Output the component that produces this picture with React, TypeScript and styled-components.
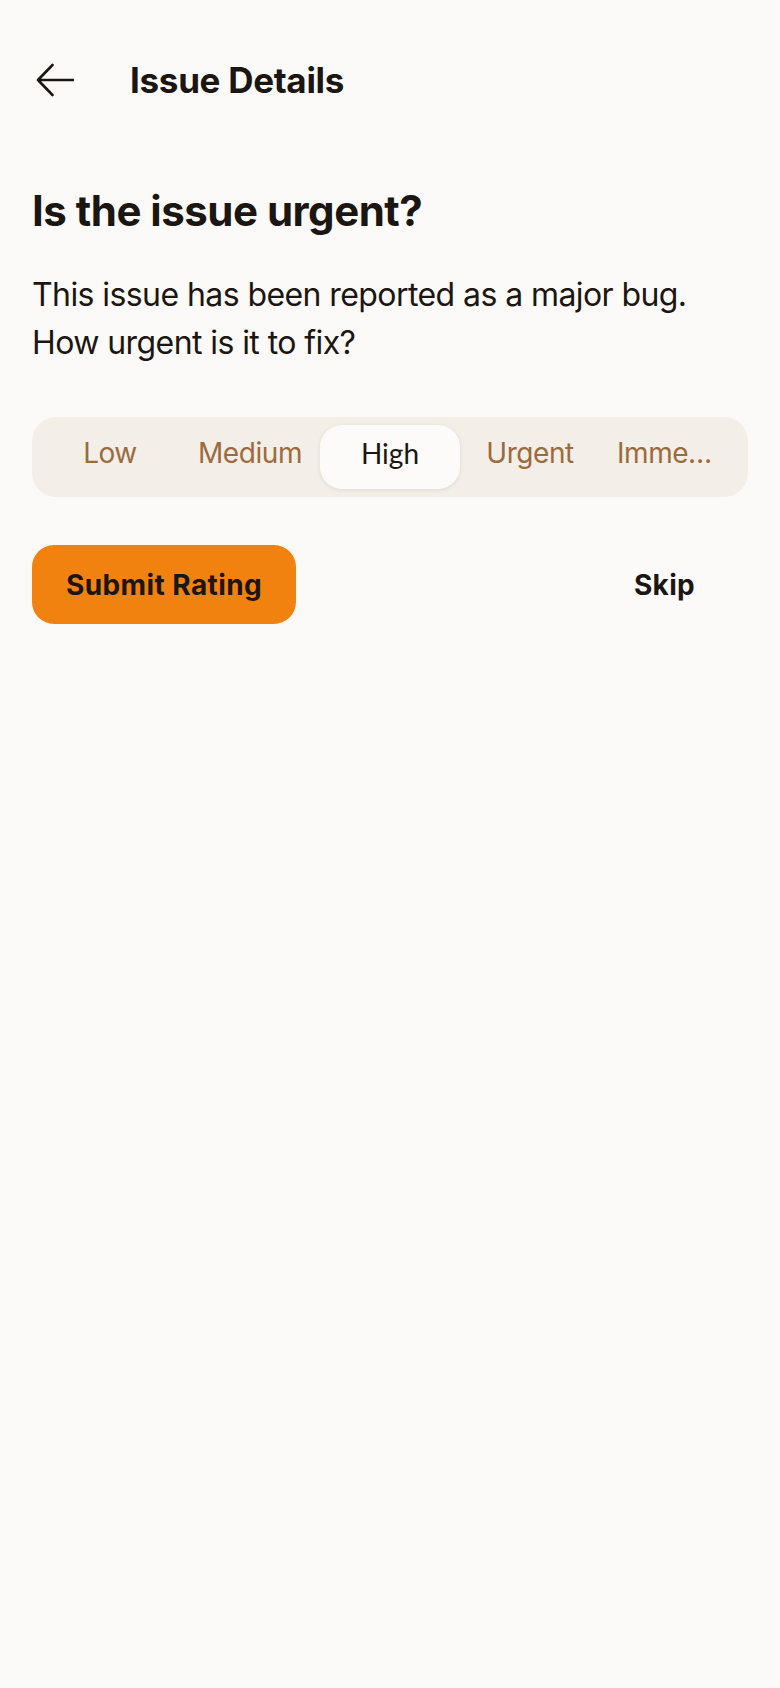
import React, { useState } from "react";
import styled, { createGlobalStyle } from "styled-components";

const GlobalStyle = createGlobalStyle`
  html, body {
    margin: 0;
    padding: 0;
    background: #fcfaf8;
  }
  body {
    font-family: Inter, "Noto Sans", "Liberation Sans", sans-serif;
    color: #1b1612;
    -webkit-font-smoothing: antialiased;
  }
  * { box-sizing: border-box; }
`;

const Page = styled.div`
  min-height: 1688px;
  background: #fcfaf8;
  padding: 56px 32px 0;
  display: flex;
  flex-direction: column;
`;

const Header = styled.header`
  display: flex;
  align-items: center;
  height: 48px;
  gap: 50px;
`;

const BackButton = styled.button`
  width: 48px;
  height: 48px;
  padding: 0;
  border: none;
  background: transparent;
  display: flex;
  align-items: center;
  justify-content: flex-start;
  color: #1b1612;
  cursor: pointer;
`;

const HeaderTitle = styled.h1`
  margin: 0;
  font-size: 35px;
  line-height: 1.2;
  font-weight: 700;
  letter-spacing: -0.3px;
`;

const Question = styled.h2`
  margin: 82px 0 0;
  font-size: 42px;
  line-height: 1.2;
  font-weight: 700;
  letter-spacing: -0.5px;
`;

const Description = styled.p`
  margin: 35px 0 0;
  font-size: 32px;
  line-height: 48px;
  font-weight: 400;
  letter-spacing: -0.58px;
`;

const Segments = styled.div`
  margin-top: 50px;
  height: 80px;
  padding: 8px;
  border-radius: 24px;
  background: #f3eee8;
  display: grid;
  grid-template-columns: repeat(5, 1fr);
`;

const Segment = styled.button<{ $active: boolean }>`
  min-width: 0;
  height: 64px;
  border: none;
  border-radius: 22px;
  padding: 0 17px 8px;
  display: flex;
  align-items: center;
  justify-content: center;
  background: ${(p) => (p.$active ? "#fdfbf9" : "transparent")};
  box-shadow: ${(p) => (p.$active ? "0 1px 4px rgba(60, 40, 20, 0.10)" : "none")};
  color: ${(p) => (p.$active ? "#1b1612" : "#9b6b3e")};
  font-family: ${(p) => (p.$active ? "Lato, Inter, sans-serif" : "Inter, sans-serif")};
  font-size: 28px;
  font-weight: 400;
  letter-spacing: ${(p) => (p.$active ? "0" : "-0.45px")};
  cursor: pointer;
`;

const SegmentLabel = styled.span`
  display: block;
  white-space: nowrap;
  overflow: hidden;
  text-overflow: ellipsis;
  max-width: 100%;
`;

const Actions = styled.div`
  margin-top: 48px;
  display: flex;
  align-items: center;
  justify-content: space-between;
`;

const PrimaryButton = styled.button`
  height: 79px;
  padding: 0 34px;
  border: none;
  border-radius: 22px;
  background: #f2820f;
  color: #1b1612;
  font-family: Inter, sans-serif;
  font-size: 28px;
  font-weight: 700;
  letter-spacing: 0.4px;
  cursor: pointer;
`;

const TextButton = styled.button`
  height: 79px;
  padding: 0 32px;
  margin-right: 21px;
  border: none;
  background: transparent;
  color: #1b1612;
  font-family: Inter, sans-serif;
  font-size: 28px;
  font-weight: 700;
  letter-spacing: 0.3px;
  cursor: pointer;
`;

const ArrowLeftIcon = () => (
  <svg width="42" height="34" viewBox="0 0 42 34" fill="none">
    <path
      d="M6 17 H42 M20.5 2 L6 17 L20.5 32"
      stroke="currentColor"
      strokeWidth="2.6"
      strokeLinecap="round"
      strokeLinejoin="round"
    />
  </svg>
);

const levels = ["Low", "Medium", "High", "Urgent", "Immediate"];

export default function App() {
  const [selected, setSelected] = useState(2);
  return (
    <>
      <GlobalStyle />
      <Page>
        <Header>
          <BackButton aria-label="Back">
            <ArrowLeftIcon />
          </BackButton>
          <HeaderTitle>Issue Details</HeaderTitle>
        </Header>
        <Question>Is the issue urgent?</Question>
        <Description>
          This issue has been reported as a major bug.
          <br />
          How urgent is it to fix?
        </Description>
        <Segments>
          {levels.map((l, i) => (
            <Segment key={l} $active={i === selected} onClick={() => setSelected(i)}>
              <SegmentLabel>{l}</SegmentLabel>
            </Segment>
          ))}
        </Segments>
        <Actions>
          <PrimaryButton>Submit Rating</PrimaryButton>
          <TextButton>Skip</TextButton>
        </Actions>
      </Page>
    </>
  );
}
